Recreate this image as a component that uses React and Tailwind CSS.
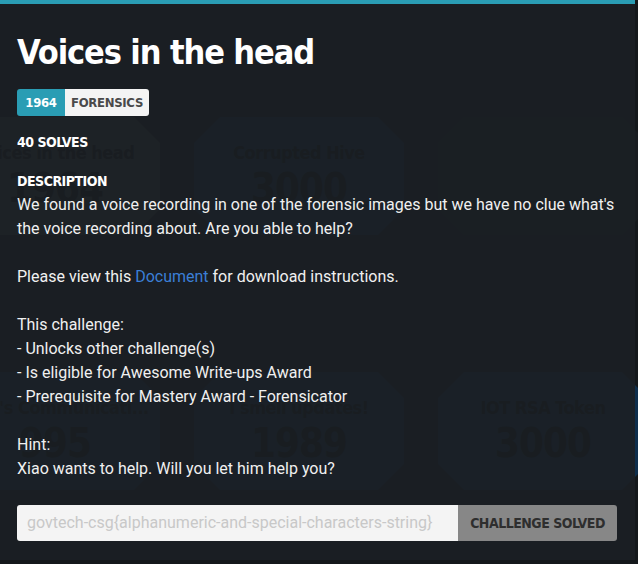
import React from "react";

const oct = { clipPath: "polygon(26px 0, calc(100% - 26px) 0, 100% 26px, 100% calc(100% - 26px), calc(100% - 26px) 100%, 26px 100%, 0 calc(100% - 26px), 0 26px)" };

function Card({ name, points, tone }) {
  const bg = tone === "solved" ? "bg-[#3c403f]" : tone === "blank" ? "bg-[#181c20]" : "bg-[#0e2e4c]";
  return (
    <div style={oct} className={`w-[210px] h-[118px] shrink-0 flex flex-col items-center pt-[24px] ${bg}`}>
      <div className="text-[18px] font-bold leading-[24px] text-[#000] whitespace-nowrap tracking-[-0.5px]">{name}</div>
      <div className="text-[40px] font-bold leading-[46px] text-[#000] tracking-[-1px]">{points}</div>
    </div>
  );
}

export default function App() {
  return (
    <div
      className="relative w-[638px] h-[564px] overflow-hidden bg-[#14181b]"
      style={{ fontFamily: "'DejaVu Sans Condensed', 'DejaVu Sans', sans-serif" }}
    >
      {/* background page */}
      <div className="flex flex-col gap-[137px] pt-[117px] ml-[-50px]">
        <div className="flex gap-[34px]">
          <Card name="Voices in the head" points="1964" tone="solved" />
          <Card name="Corrupted Hive" points="3000" />
          <Card name="" points="" tone="blank" />
        </div>
        <div className="flex gap-[34px]">
          <Card name="Xiao's Communicati..." points="995" />
          <Card name="I smell updates!" points="1989" />
          <Card name="IOT RSA Token" points="3000" />
        </div>
      </div>

      {/* modal */}
      <div className="absolute left-0 top-0 w-[635px] h-[560px] bg-[rgba(27,32,36,0.92)] border-t-[4px] border-[#2a9db4] px-[17px]">
        <h1 className="mt-[26px] text-[34px] leading-[44px] font-bold text-white tracking-[-1.1px]">
          Voices in the head
        </h1>
        <div className="mt-[15px] flex h-[27px] w-fit rounded-[3px] overflow-hidden text-[13px] font-bold tracking-[-0.3px]">
          <div className="w-[48px] bg-[#2a9db4] text-white flex items-center justify-center">1964</div>
          <div className="w-[84px] bg-[#f4f4f4] text-[#4a4a4a] flex items-center justify-center">FORENSICS</div>
        </div>
        <div className="mt-[17px] text-[14px] font-bold leading-[18px] text-white tracking-[-0.5px]">40 SOLVES</div>
        <div className="mt-[21px] text-[14px] font-bold leading-[18px] text-white tracking-[-0.5px]">DESCRIPTION</div>
        <div className="mt-[3px] text-[16px] leading-[24px] text-[#f0f0f0]" style={{ fontFamily: "Roboto, sans-serif" }}>
          <p>We found a voice recording in one of the forensic images but we have no clue what's the voice recording about. Are you able to help?</p>
          <p className="mt-[24px]">
            Please view this <a className="text-[#3b7fd6]">Document</a> for download instructions.
          </p>
          <p className="mt-[24px]">This challenge:</p>
          <p>- Unlocks other challenge(s)</p>
          <p>- Is eligible for Awesome Write-ups Award</p>
          <p>- Prerequisite for Mastery Award - Forensicator</p>
          <p className="mt-[24px]">Hint:</p>
          <p>Xiao wants to help. Will you let him help you?</p>
        </div>
        <div className="mt-[24px] flex h-[36px] w-[600px] rounded-[3px] overflow-hidden">
          <div
            className="flex-1 bg-[#f4f4f4] text-[#c8c8c8] text-[16px] flex items-center px-[10px]"
            style={{ fontFamily: "Roboto, sans-serif" }}
          >
            govtech-csg{"{"}alphanumeric-and-special-characters-string{"}"}
          </div>
          <div className="w-[159px] bg-[#878787] text-[#2e2e2e] text-[14px] font-bold flex items-center justify-center tracking-[-0.5px]">
            CHALLENGE SOLVED
          </div>
        </div>
      </div>
    </div>
  );
}
